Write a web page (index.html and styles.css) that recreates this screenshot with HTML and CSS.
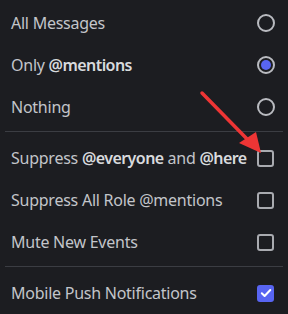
FILE: index.html
```html
<!DOCTYPE html>
<html lang="en">
<head>
    <meta charset="UTF-8">
    <title>Notification Settings</title>
    <link rel="stylesheet" href="styles.css">
</head>
<body>
    <div class="menu">
        <!-- Notification level -->
        <div class="row">
            <span class="label">All Messages</span>
            <span class="radio"></span>
        </div>
        <div class="row">
            <span class="label">Only <b>@mentions</b></span>
            <span class="radio checked"></span>
        </div>
        <div class="row">
            <span class="label">Nothing</span>
            <span class="radio"></span>
        </div>

        <div class="divider"></div>

        <!-- Suppress options -->
        <div class="row">
            <span class="label">Suppress <b>@everyone</b> and <b>@here</b></span>
            <span class="box"></span>
        </div>
        <div class="row">
            <span class="label">Suppress All Role @mentions</span>
            <span class="box"></span>
        </div>
        <div class="row">
            <span class="label">Mute New Events</span>
            <span class="box"></span>
        </div>

        <div class="divider"></div>

        <div class="row">
            <span class="label">Mobile Push Notifications</span>
            <span class="box checked">
                <svg width="12" height="12" viewBox="0 0 12 12"><path d="M1.8 6.3 L4.6 9 L10.3 3" fill="none" stroke="#fff" stroke-width="2" stroke-linecap="round" stroke-linejoin="round"/></svg>
            </span>
        </div>
    </div>

    <!-- Annotation arrow -->
    <svg class="arrow" width="288" height="314" viewBox="0 0 288 314">
        <line x1="202" y1="93" x2="250" y2="142" stroke="#ee3535" stroke-width="3.5" stroke-linecap="round"/>
        <polygon points="261,153 239,143 256,132" fill="#ee3535"/>
    </svg>
</body>
</html>
```

FILE: styles.css
```css
/* General */
body {
    margin: 0;
    background-color: #1c1d21;
    font-family: 'Noto Sans', sans-serif;
    color: #c3c5ca;
    width: 288px;
    height: 314px;
    overflow: hidden;
    position: relative;
}

.menu {
    padding: 2px 5px 0 5px;
}

.row {
    height: 42px;
    display: flex;
    align-items: center;
    justify-content: space-between;
    padding: 0 8px 0 6px;
    font-size: 16px;
    letter-spacing: -0.25px;
}

.label {
    white-space: nowrap;
}

.label b {
    font-weight: 600;
    letter-spacing: -0.55px;
    color: #d8dadd;
}

.divider {
    height: 1px;
    background-color: #3b3d43;
    margin: 3px 0 5px 0;
}

/* Radio buttons */
.radio {
    width: 14px;
    height: 14px;
    border: 2px solid #b9bbc0;
    border-radius: 50%;
    display: flex;
    align-items: center;
    justify-content: center;
}

.radio.checked::after {
    content: "";
    width: 10px;
    height: 10px;
    border-radius: 50%;
    background-color: #5865f2;
}

/* Checkboxes */
.box {
    width: 13px;
    height: 13px;
    border: 2px solid #a9abb0;
    border-radius: 3px;
    margin-right: 1px;
    display: flex;
    align-items: center;
    justify-content: center;
    flex-shrink: 0;
}

.box.checked {
    background-color: #5865f2;
    border-color: #5865f2;
}

.arrow {
    position: absolute;
    left: 0;
    top: 0;
}
```
